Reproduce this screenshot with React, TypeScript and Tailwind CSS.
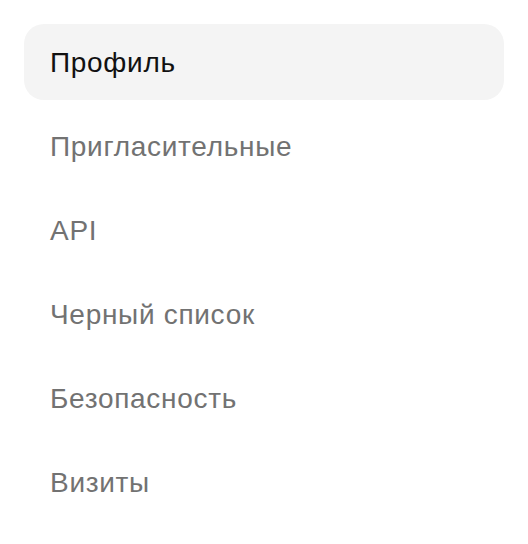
const items = [
  'Профиль',
  'Пригласительные',
  'API',
  'Черный список',
  'Безопасность',
  'Визиты',
];

export default function App() {
  return (
    <div className="min-h-screen bg-white p-6 font-['Liberation_Sans',Arial,sans-serif]">
      <nav className="flex flex-col gap-2">
        {items.map((item, i) => (
          <a
            key={item}
            href="#"
            className={
              i === 0
                ? 'flex h-[76px] items-center rounded-[20px] bg-[#f4f4f4] px-[26px] pt-[2px] text-[28px] tracking-[0.7px] text-[#111]'
                : 'flex h-[76px] items-center rounded-[20px] px-[26px] pt-[2px] text-[28px] tracking-[0.7px] text-[#727272]'
            }
          >
            {item}
          </a>
        ))}
      </nav>
    </div>
  );
}
